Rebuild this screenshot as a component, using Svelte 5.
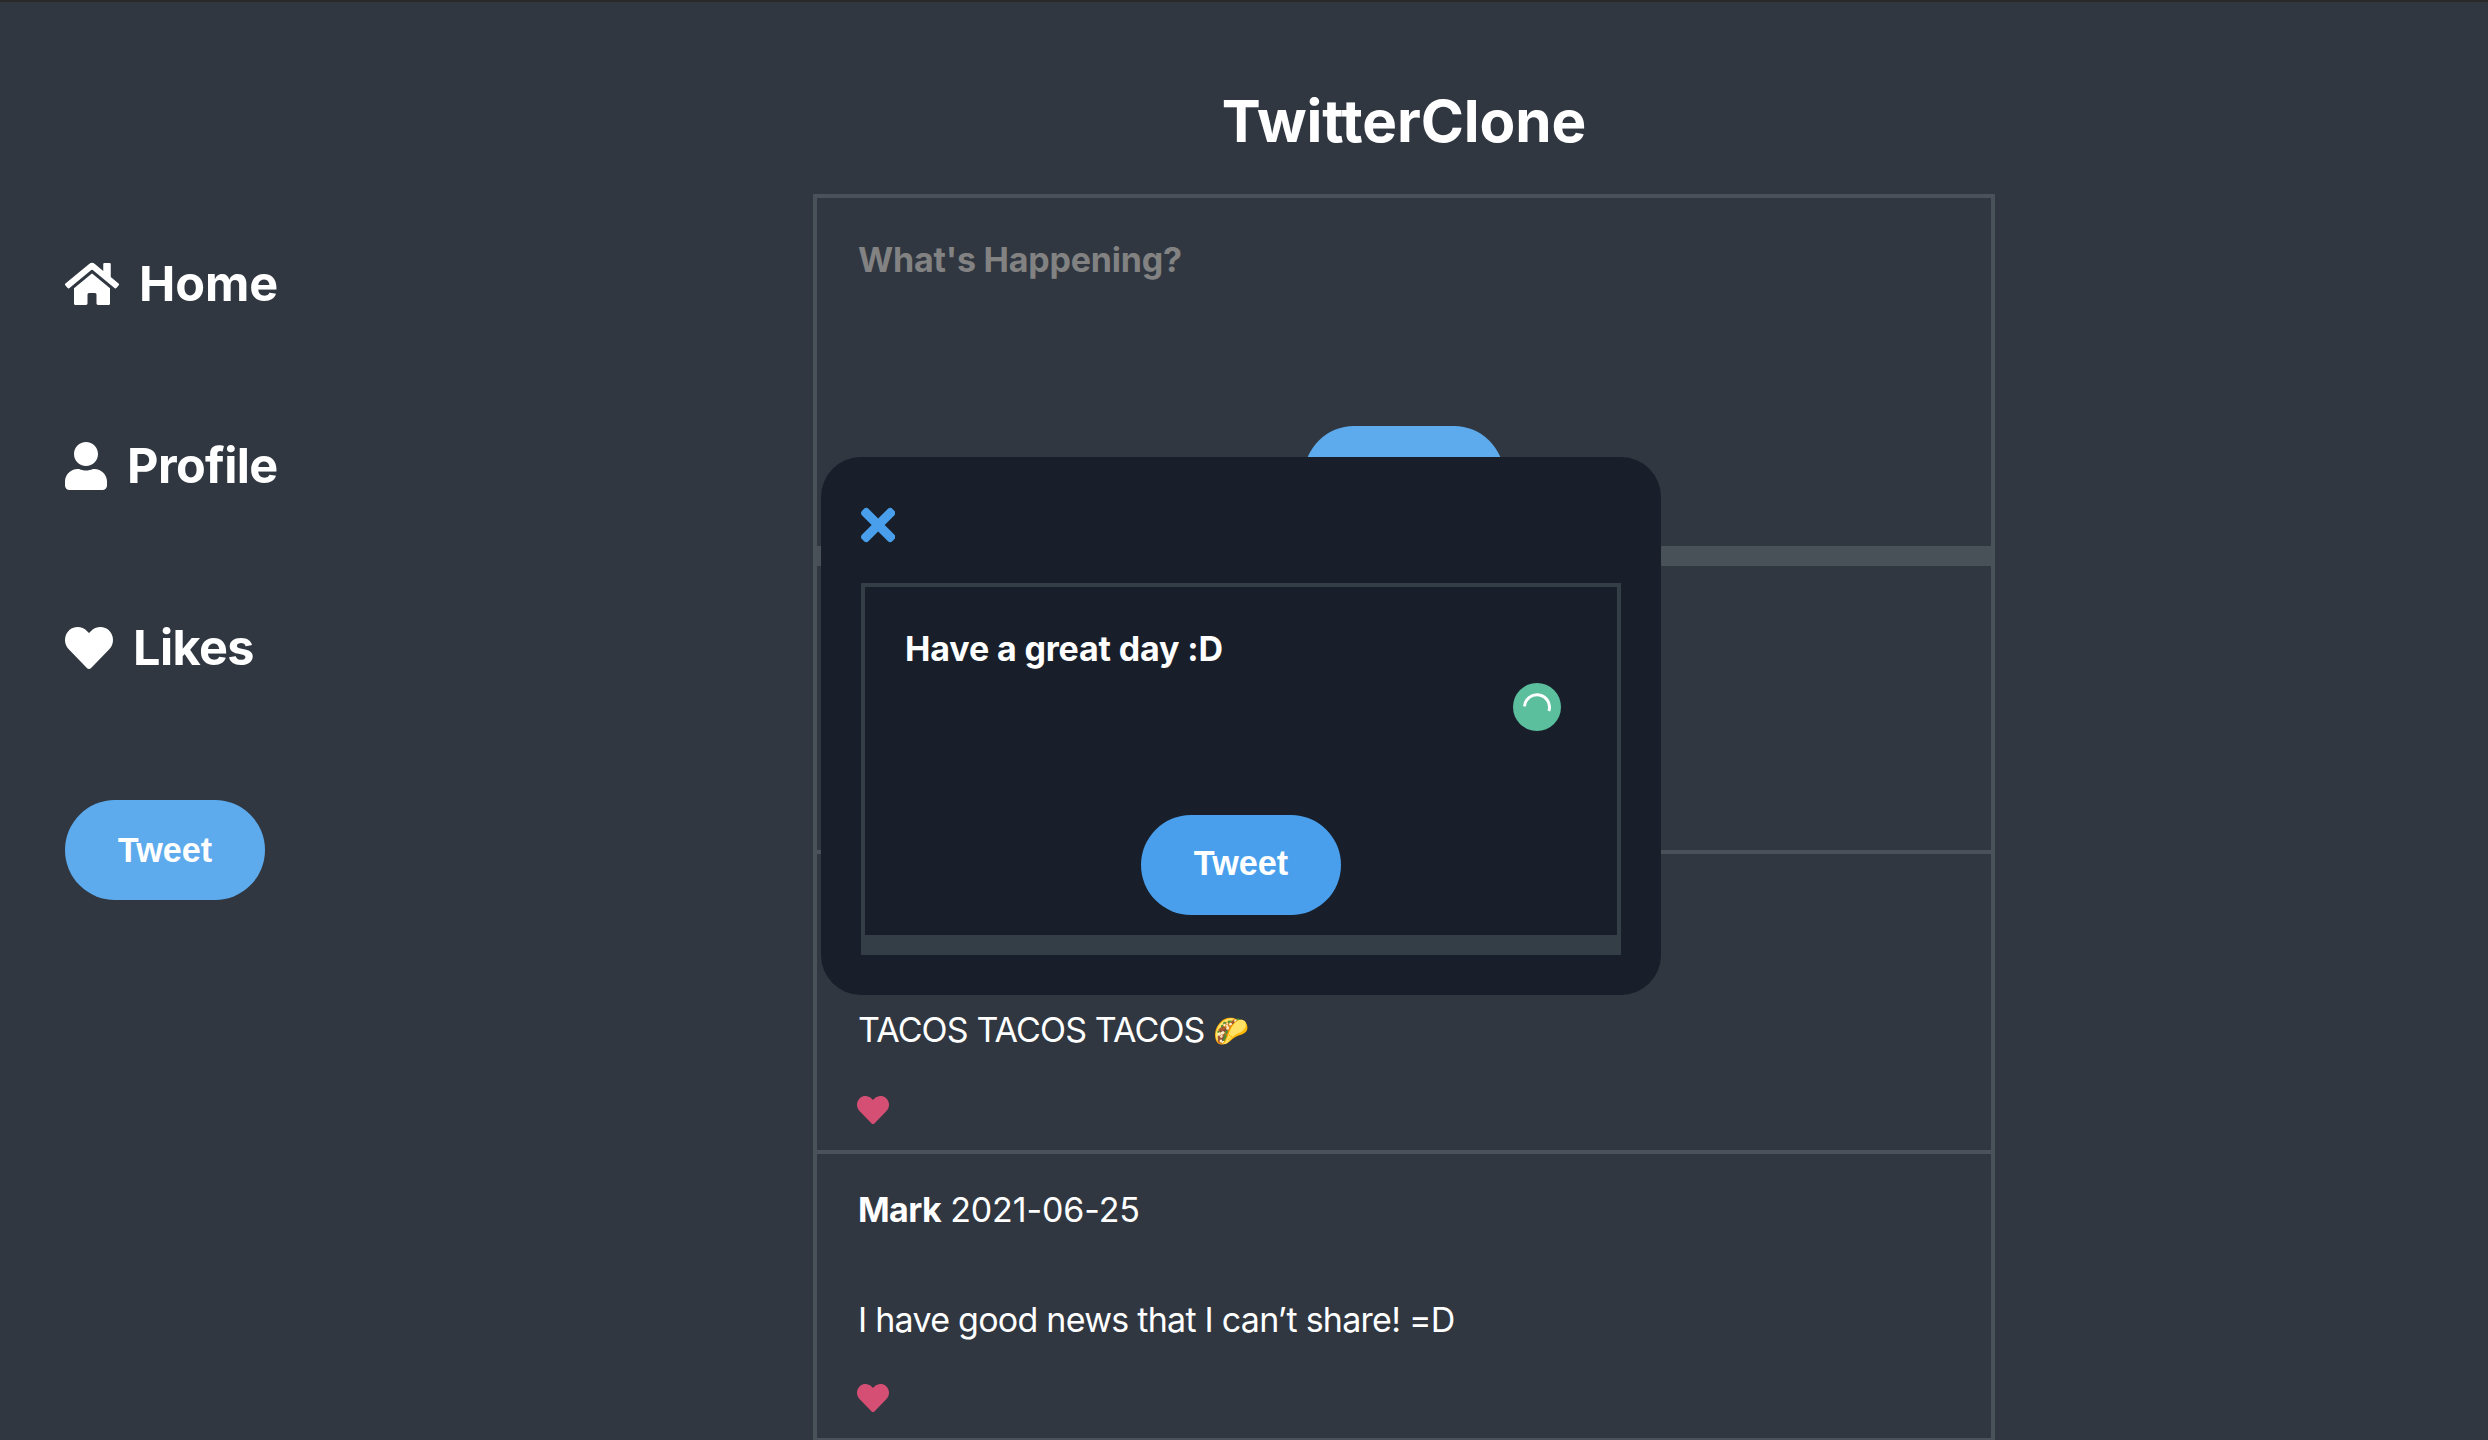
<script>
  const icons = {
    home: {
      box: '0 0 576 512',
      d: 'M280.37 148.26L96 300.11V464a16 16 0 0 0 16 16l112.06-.29a16 16 0 0 0 15.92-16V368a16 16 0 0 1 16-16h64a16 16 0 0 1 16 16v95.64a16 16 0 0 0 16 16.05L464 480a16 16 0 0 0 16-16V300L295.67 148.26a12.19 12.19 0 0 0-15.3 0zM571.6 251.47L488 182.56V44.05a12 12 0 0 0-12-12h-56a12 12 0 0 0-12 12v72.61L318.47 43a48 48 0 0 0-61 0L4.34 251.47a12 12 0 0 0-1.6 16.9l25.5 31A12 12 0 0 0 45.15 301l235.22-193.74a12.19 12.19 0 0 1 15.3 0L530.9 301a12 12 0 0 0 16.9-1.6l25.5-31a12 12 0 0 0-1.7-16.93z'
    },
    user: {
      box: '0 0 448 512',
      d: 'M224 256c70.7 0 128-57.3 128-128S294.7 0 224 0 96 57.3 96 128s57.3 128 128 128zm89.6 32h-16.7c-22.2 10.2-46.9 16-72.9 16s-50.6-5.8-72.9-16h-16.7C60.2 288 0 348.2 0 422.4V464c0 26.5 21.5 48 48 48h352c26.5 0 48-21.5 48-48v-41.6c0-74.2-60.2-134.4-134.4-134.4z'
    },
    heart: {
      box: '0 0 512 512',
      d: 'M462.3 62.6C407.5 15.9 326 24.3 275.7 76.2L256 96.5l-19.7-20.3C186.1 24.3 104.5 15.9 49.7 62.6c-62.8 53.6-66.1 149.8-9.9 207.9l193.5 199.8c12.5 12.9 32.8 12.9 45.3 0l193.5-199.8c56.3-58.1 53-154.3-9.8-207.9z'
    },
    times: {
      box: '0 0 352 512',
      d: 'M242.72 256l100.07-100.07c12.28-12.28 12.28-32.19 0-44.48l-22.24-22.24c-12.28-12.28-32.19-12.28-44.48 0L176 189.28 75.93 89.21c-12.28-12.28-32.19-12.28-44.48 0L9.21 111.45c-12.28 12.28-12.28 32.19 0 44.48L109.28 256 9.21 356.07c-12.28 12.28-12.28 32.19 0 44.48l22.24 22.24c12.28 12.28 32.2 12.28 44.48 0L176 322.72l100.07 100.07c12.28 12.28 32.2 12.28 44.48 0l22.24-22.24c12.28-12.28 12.28-32.19 0-44.48L242.72 256z'
    }
  };

  const links = [
    { label: 'Home', icon: 'home' },
    { label: 'Profile', icon: 'user' },
    { label: 'Likes', icon: 'heart' }
  ];

  const tweets = [
    { author: '', date: '', text: '', emoji: '' },
    { author: '', date: '', text: 'TACOS TACOS TACOS', emoji: '🌮' },
    { author: 'Mark', date: '2021-06-25', text: 'I have good news that I can’t share! =D', emoji: '' }
  ];
</script>

{#snippet glyph(name)}
  <svg class="icon {name}" viewBox={icons[name].box} aria-hidden="true"><path d={icons[name].d} /></svg>
{/snippet}

<div class="page">
  <nav class="side">
    {#each links as link}
      <a class="link {link.icon}-link" href="#{link.icon}">
        {@render glyph(link.icon)}
        <span>{link.label}</span>
      </a>
    {/each}
    <button class="tweet-btn">Tweet</button>
  </nav>

  <main class="main">
    <h1>TwitterClone</h1>
    <section class="feed">
      <div class="composer">
        <p class="placeholder">What's Happening?</p>
        <button class="tweet-btn">Tweet</button>
      </div>
      {#each tweets as tweet}
        <article class="tweet" class:with-emoji={tweet.emoji}>
          <p class="meta"><b>{tweet.author}</b><span>{tweet.date}</span></p>
          <p class="text">{tweet.text}{#if tweet.emoji}<span class="emoji">{tweet.emoji}</span>{/if}</p>
          <div class="like">{@render glyph('heart')}</div>
        </article>
      {/each}
    </section>
  </main>

  <div class="modal" role="dialog" aria-label="Compose">
    <div class="close">{@render glyph('times')}</div>
    <div class="draft">
      <p class="draft-text">Have a great day :D</p>
      <button class="tweet-btn">Tweet</button>
      <svg class="checker" viewBox="-24 -24 48 48" aria-hidden="true">
        <circle r="24" />
        <path d="M-12.5 -.6A12.5 12.5 0 1 1 11.9 4" />
      </svg>
    </div>
  </div>
</div>

<style>
  :global(body) {
    margin: 0;
    background: #303741;
  }

  .page {
    box-sizing: border-box;
    position: relative;
    display: flex;
    height: 1440px;
    overflow: hidden;
    border-top: 2px solid #292929;
    background: #303741;
    color: #fff;
    font-family: Inter, 'Liberation Sans', sans-serif;
    font-size: 34px;
    line-height: 40px;
  }

  p,
  h1 {
    margin: 0;
  }

  .icon {
    display: block;
    height: 48px;
    fill: currentColor;
  }

  .side {
    box-sizing: border-box;
    flex: none;
    display: flex;
    flex-direction: column;
    align-items: flex-start;
    gap: 122px;
    width: 813px;
    padding: 252px 0 0 65px;
  }

  .link {
    display: flex;
    align-items: center;
    gap: 20px;
    height: 60px;
    color: #fff;
    font-size: 48.6px;
    font-weight: 700;
    line-height: 60px;
    letter-spacing: -0.6px;
    text-decoration: none;
  }

  .home-link {
    letter-spacing: -0.1px;
  }

  .tweet-btn {
    flex: none;
    width: 200px;
    height: 100px;
    padding: 0;
    border: 0;
    border-radius: 50px;
    background: #5dabed;
    color: #fff;
    font: 700 34.2px 'Liberation Sans', Arial, sans-serif;
  }

  .main {
    flex: none;
    width: 1182px;
  }

  h1 {
    padding: 89px 0 43px;
    font-size: 58.4px;
    font-weight: 700;
    line-height: 60px;
    letter-spacing: -0.1px;
    text-align: center;
  }

  .feed {
    border: 4px solid #495159;
  }

  .composer {
    box-sizing: border-box;
    display: flex;
    flex-direction: column;
    align-items: center;
    justify-content: space-between;
    height: 368px;
    padding: 42px 41px 20px;
    border-bottom: 20px solid #495158;
  }

  .placeholder {
    align-self: stretch;
    color: #828282;
    font-weight: 700;
    letter-spacing: -0.2px;
  }

  .tweet {
    padding: 36px 41px 24px;
    border-bottom: 4px solid #495159;
  }

  .meta {
    display: flex;
    gap: 9px;
    height: 40px;
    margin-bottom: 70px;
    letter-spacing: -0.1px;
  }

  .meta b {
    font-weight: 700;
    letter-spacing: -0.6px;
  }

  .text {
    height: 40px;
    margin-bottom: 42px;
    letter-spacing: -0.74px;
    white-space: nowrap;
  }

  .with-emoji .meta {
    margin-bottom: 80px;
  }

  .with-emoji .text {
    margin-bottom: 44px;
    letter-spacing: -0.86px;
  }

  .emoji {
    position: relative;
    top: -1px;
    margin-left: 8px;
    font-size: 29px;
    line-height: 0;
  }

  .like {
    margin-left: -1px;
    color: #d54e73;
  }

  .like .icon {
    height: 32px;
  }

  .modal {
    box-sizing: border-box;
    position: absolute;
    top: 455px;
    left: 821px;
    width: 840px;
    height: 538px;
    padding: 43px 40px 40px;
    border-radius: 40px;
    background: #181f2a;
  }

  .close {
    margin-bottom: 33px;
    color: #499feb;
  }

  .close .icon {
    height: 50px;
  }

  .draft {
    box-sizing: border-box;
    position: relative;
    display: flex;
    flex-direction: column;
    align-items: center;
    justify-content: space-between;
    height: 372px;
    padding: 42px 40px 20px;
    border: 4px solid #343e47;
    border-bottom-width: 20px;
  }

  .draft-text {
    align-self: stretch;
    font-weight: 700;
    letter-spacing: -0.15px;
  }

  .draft .tweet-btn {
    padding-bottom: 4px;
    background: #499feb;
  }

  .checker {
    position: absolute;
    top: 96px;
    right: 56px;
    width: 48px;
    height: 48px;
  }

  .checker circle {
    fill: #5bbf9d;
  }

  .checker path {
    fill: none;
    stroke: #fff;
    stroke-width: 3;
  }
</style>
